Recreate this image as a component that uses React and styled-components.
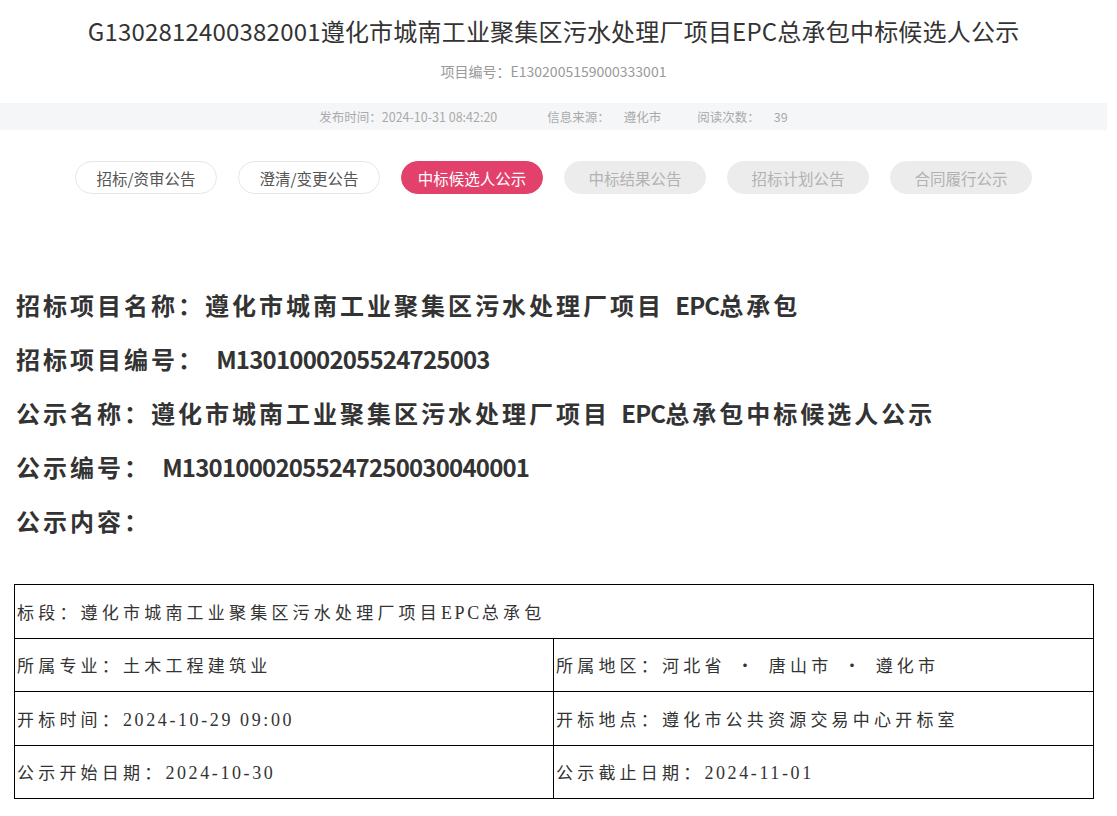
import React from "react";
import styled, { createGlobalStyle } from "styled-components";

const Global = createGlobalStyle`
  html, body { margin: 0; padding: 0; background: #fff; }
  body { font-family: "Noto Sans CJK SC", "Noto Sans", sans-serif; color: #333; }
`;

const Page = styled.div`
  padding-right: 10px;
  padding-bottom: 20px;
`;

const Title = styled.h1`
  margin: 0;
  padding-top: 14px;
  text-align: center;
  font-size: 24px;
  font-weight: 400;
  line-height: 34px;
  letter-spacing: 0.2px;
  color: #333;
`;

const SubTitle = styled.div`
  margin-top: 13px;
  text-align: center;
  font-size: 14px;
  line-height: 20px;
  color: #999;
`;

const InfoBar = styled.div`
  margin-top: 22px;
  height: 27px;
  background: #f5f6f7;
  display: flex;
  justify-content: center;
  align-items: center;
  font-size: 12.5px;
  color: #aaa;
`;

const InfoItem = styled.span`
  display: flex;
  gap: 14px;
  margin-left: ${(p) => p.$space || 0}px;
`;

const Tabs = styled.div`
  margin-top: 31px;
  display: flex;
  justify-content: center;
  gap: 21px;
`;

const Tab = styled.div`
  width: 142px;
  height: 33px;
  box-sizing: border-box;
  border-radius: 17px;
  display: flex;
  align-items: center;
  justify-content: center;
  font-size: 15.5px;
  ${(p) =>
    p.$kind === "active"
      ? `background: #e1416b; color: #fff; border: 1px solid #e1416b;`
      : p.$kind === "off"
      ? `background: #ececec; color: #b2b2b2; border: 1px solid #ececec;`
      : `background: #fff; color: #555; border: 1px solid #e6e6e6;`}
`;

const Content = styled.div`
  margin-top: 84px;
  padding: 0 14px;
`;

const Heading = styled.p`
  margin: 0;
  padding-left: 2px;
  font-size: 24px;
  font-weight: 700;
  line-height: 54px;
  letter-spacing: 3px;
  color: #333;
  white-space: nowrap;
`;

const HeadLatin = styled.span`
  letter-spacing: -0.8px;
`;

const Table = styled.table`
  margin-top: 36px;
  width: 1080px;
  border-collapse: collapse;
  table-layout: fixed;
`;

const Cell = styled.td`
  border: 1px solid #000;
  height: 52.5px;
  padding: 0 0 0 2px;
  font-size: 17px;
  letter-spacing: 4.2px;
  color: #333;
  white-space: nowrap;
  vertical-align: middle;
`;

const CellLatin = styled.span`
  font-family: "Liberation Serif", serif;
  font-size: 18px;
  letter-spacing: 2.6px;
`;

const Dot = styled.span`
  margin: 0 3px;
`;

function Mixed({ text, Latin }) {
  const parts = text.match(/[\x20-\x7e\u2002]+|[^\x20-\x7e\u2002]+/g) || [];
  return parts.map((s, i) =>
    /^[\x20-\x7e\u2002]+$/.test(s) ? <Latin key={i}>{s}</Latin> : <React.Fragment key={i}>{s}</React.Fragment>
  );
}

const tabs = [
  ["招标/资审公告", "normal"],
  ["澄清/变更公告", "normal"],
  ["中标候选人公示", "active"],
  ["中标结果公告", "off"],
  ["招标计划公告", "off"],
  ["合同履行公示", "off"],
];

const headings = [
  "招标项目名称：遵化市城南工业聚集区污水处理厂项目 EPC总承包",
  "招标项目编号： M1301000205524725003",
  "公示名称：遵化市城南工业聚集区污水处理厂项目 EPC总承包中标候选人公示",
  "公示编号： M13010002055247250030040001",
  "公示内容：",
];

export default function App() {
  return (
    <Page>
      <Global />
      <Title>G1302812400382001遵化市城南工业聚集区污水处理厂项目EPC总承包中标候选人公示</Title>
      <SubTitle>项目编号：E1302005159000333001</SubTitle>
      <InfoBar>
        <InfoItem>发布时间：2024-10-31 08:42:20</InfoItem>
        <InfoItem $space={50}>
          <span>信息来源：</span>
          <span>遵化市</span>
        </InfoItem>
        <InfoItem $space={36}>
          <span>阅读次数：</span>
          <span>39</span>
        </InfoItem>
      </InfoBar>
      <Tabs>
        {tabs.map(([t, k]) => (
          <Tab key={t} $kind={k}>
            {t}
          </Tab>
        ))}
      </Tabs>
      <Content>
        {headings.map((h) => (
          <Heading key={h}>
            <Mixed text={h.replace(/ /g, "\u2002")} Latin={HeadLatin} />
          </Heading>
        ))}
        <Table>
          <colgroup>
            <col style={{ width: "539px" }} />
            <col />
          </colgroup>
          <tbody>
            <tr>
              <Cell colSpan={2}>
                <Mixed text="标段：遵化市城南工业聚集区污水处理厂项目EPC总承包" Latin={CellLatin} />
              </Cell>
            </tr>
            <tr>
              <Cell>所属专业：土木工程建筑业</Cell>
              <Cell>
                所属地区：河北省 <Dot>•</Dot> 唐山市 <Dot>•</Dot> 遵化市
              </Cell>
            </tr>
            <tr>
              <Cell>
                <Mixed text="开标时间：2024-10-29 09:00" Latin={CellLatin} />
              </Cell>
              <Cell>开标地点：遵化市公共资源交易中心开标室</Cell>
            </tr>
            <tr>
              <Cell>
                <Mixed text="公示开始日期：2024-10-30" Latin={CellLatin} />
              </Cell>
              <Cell>
                <Mixed text="公示截止日期：2024-11-01" Latin={CellLatin} />
              </Cell>
            </tr>
          </tbody>
        </Table>
      </Content>
    </Page>
  );
}
